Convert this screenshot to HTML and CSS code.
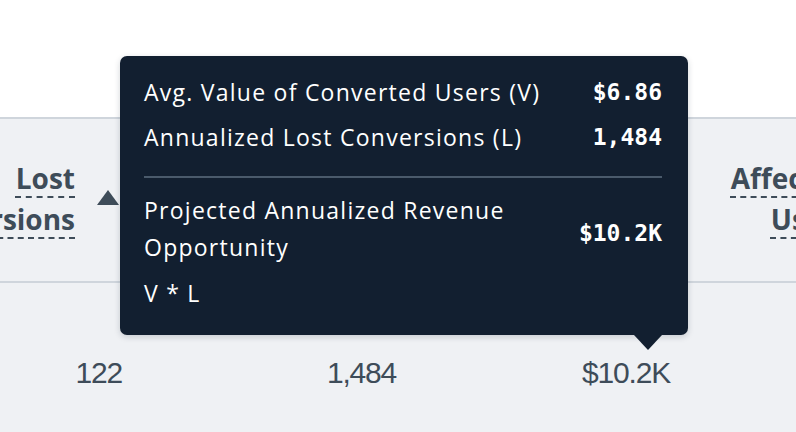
FILE: index.html
```html
<!DOCTYPE html>
<html>
<head>
<meta charset="utf-8">
<link rel="stylesheet" href="styles.css">
</head>
<body>
<div class="page">
  <div class="top"></div>
  <div class="table">
    <div class="row head">
      <div class="cell hcell sorted">
        <span class="label">Lost Conversions</span>
        <span class="sort"></span>
      </div>
      <div class="cell hcell"><span class="label">Annualized Conversions</span></div>
      <div class="cell hcell"><span class="label">Revenue Opportunity</span></div>
      <div class="cell hcell last"><span class="label">Affected Users</span></div>
    </div>
    <div class="row body">
      <div class="cell num">122</div>
      <div class="cell num">1,484</div>
      <div class="cell num">$10.2K</div>
      <div class="cell num"></div>
    </div>
  </div>
  <div class="tooltip">
    <div class="trow">
      <div class="tlabel">Avg. Value of Converted Users (V)</div>
      <div class="tval">$6.86</div>
    </div>
    <div class="trow">
      <div class="tlabel">Annualized Lost Conversions (L)</div>
      <div class="tval">1,484</div>
    </div>
    <div class="tsep"></div>
    <div class="trow big">
      <div class="tlabel">Projected Annualized Revenue<br>Opportunity</div>
      <div class="tval center">$10.2K</div>
    </div>
    <div class="formula">V * L</div>
  </div>
</div>
</body>
</html>
```

FILE: styles.css
```css
* { box-sizing: border-box; }
html, body { margin: 0; padding: 0; }
body {
  width: 796px;
  height: 432px;
  overflow: hidden;
  background: #eff1f4;
  font-family: "Open Sans", "Liberation Sans", sans-serif;
}
.page { position: relative; width: 796px; height: 432px; overflow: hidden; }
.top { height: 119px; background: #ffffff; border-bottom: 2px solid #cfd5dc; }
.table { margin-left: -152px; width: 1100px; }
.row { display: flex; }
.head { height: 164px; border-bottom: 2px solid #cfd5dc; padding-bottom: 2px; }
.cell { width: 274px; flex: none; }
.hcell {
  display: flex;
  align-items: center;
  justify-content: flex-end;
  padding-right: 52px;
  color: #3e4c59;
  font-weight: 700;
  font-size: 28px;
  line-height: 41px;
  text-align: right;
}
.hcell.sorted { padding-right: 3px; }
.hcell.last { padding-right: 95px; }
.label {
  max-width: 180px;
  text-decoration: underline dashed #3e4c59;
  text-decoration-thickness: 2px;
  text-underline-offset: 7px;
}
.hcell.last .label { max-width: 150px; }
.sort {
  margin-left: 22px;
  margin-top: -4px;
  width: 0; height: 0;
  border-left: 11px solid transparent;
  border-right: 11px solid transparent;
  border-bottom: 15px solid #3e4c59;
}
.num {
  text-align: right;
  color: #3e4c59;
  font-family: "Liberation Sans", sans-serif;
  font-size: 30px;
  letter-spacing: -1.2px;
  line-height: 36px;
  padding-top: 72px;
}
.tooltip {
  position: absolute;
  left: 120px;
  top: 56px;
  width: 568px;
  height: 279px;
  background: #121f30;
  border-radius: 7px;
  box-shadow: 0 2px 6px rgba(18, 31, 48, 0.18);
  padding: 18px 26px 0 24px;
  color: #ffffff;
  font-size: 23px;
  letter-spacing: 1.25px;
  line-height: 37px;
}
.tooltip::after {
  content: "";
  position: absolute;
  left: 514px;
  top: 279px;
  width: 0; height: 0;
  border-left: 14px solid transparent;
  border-right: 14px solid transparent;
  border-top: 15px solid #121f30;
}
.trow { display: flex; justify-content: space-between; align-items: center; }
.trow + .trow { margin-top: 8px; }
.tval {
  font-family: "DejaVu Sans Mono", "Liberation Mono", monospace;
  font-weight: 700;
  font-size: 23px;
  letter-spacing: 0;
}
.tval.center { margin-top: 8px; }
.tsep { height: 2px; background: #4a5a6b; margin: 20px 0 14px; }
.formula { margin-top: 9px; }
```
